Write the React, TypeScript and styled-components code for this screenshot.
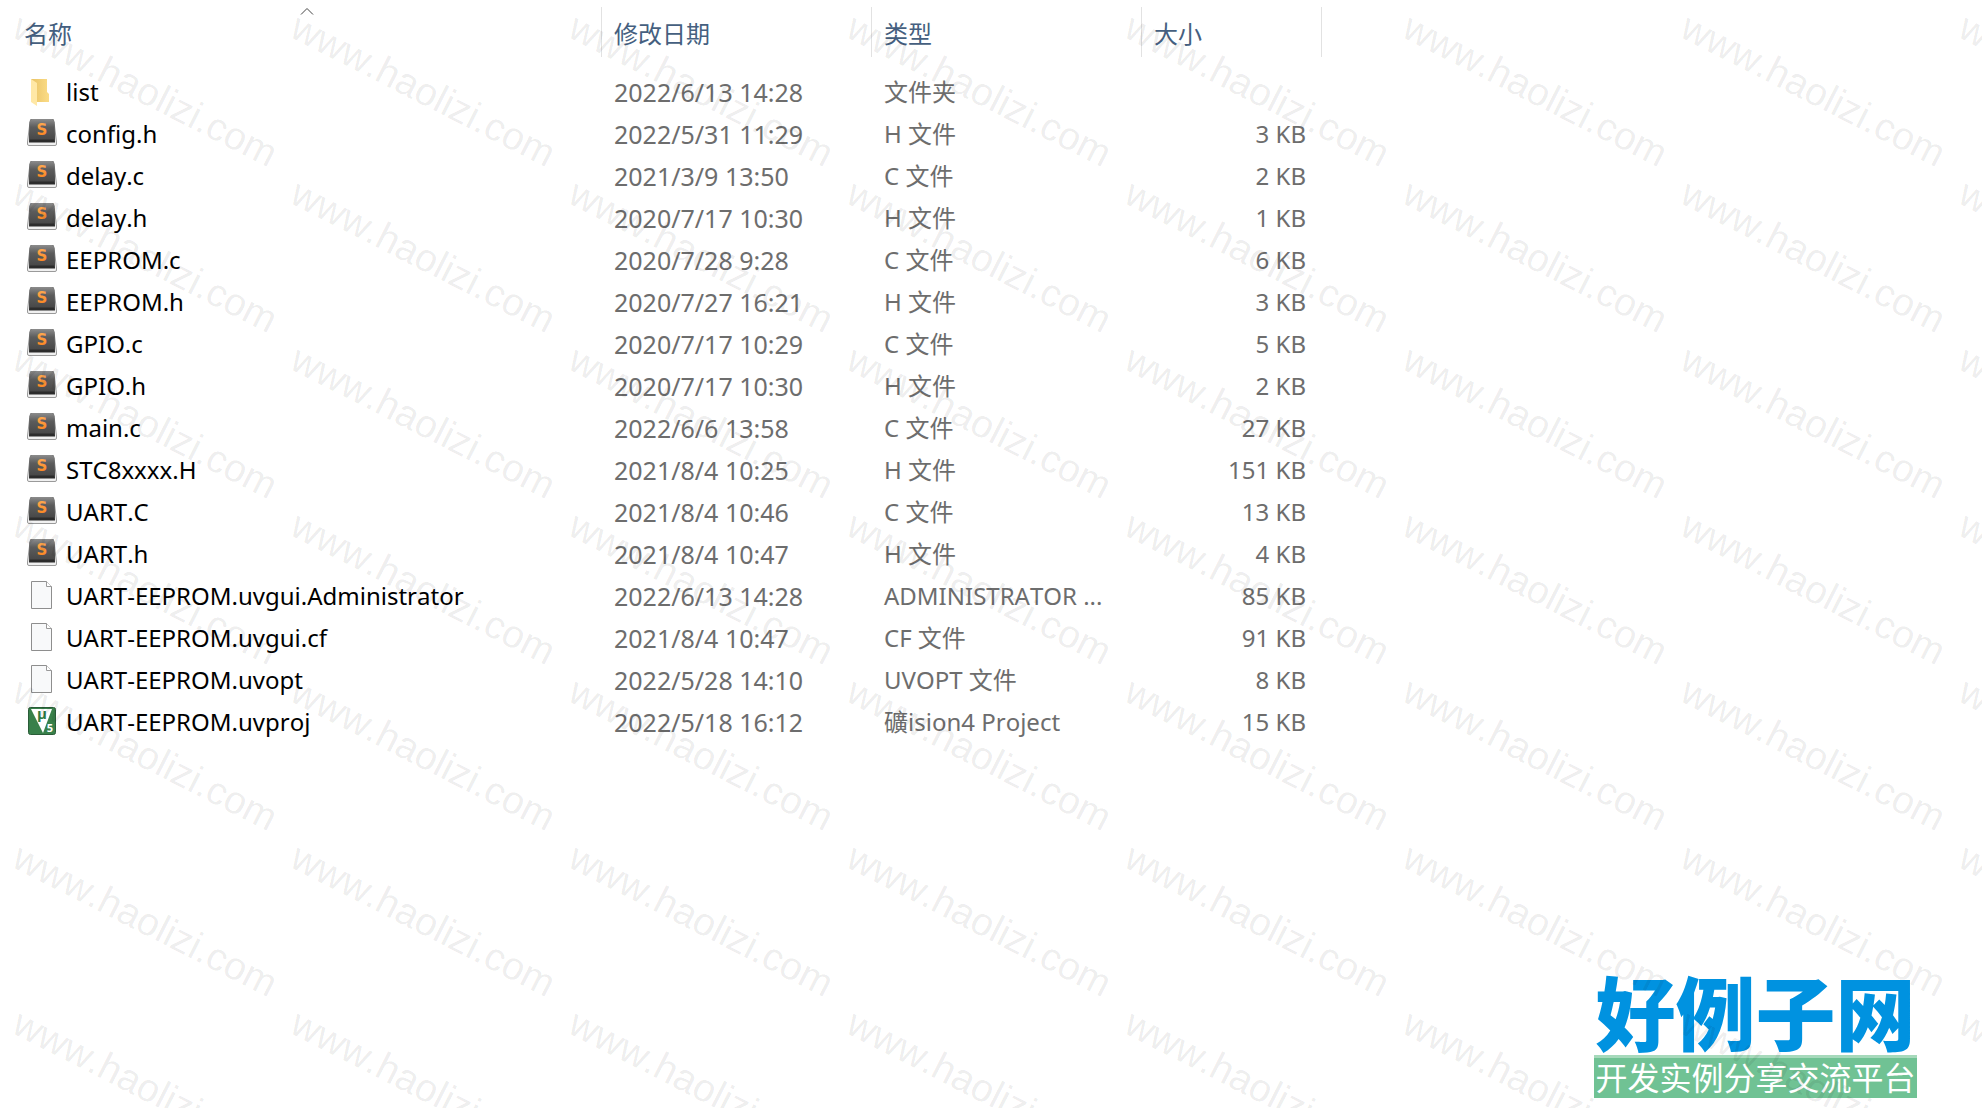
import React from "react";
import styled, { createGlobalStyle } from "styled-components";

const GlobalStyle = createGlobalStyle`
  * {
    box-sizing: border-box;
  }

  body {
    margin: 0;
    background: #ffffff;
    font-family: "Noto Sans", "Noto Sans CJK SC", sans-serif;
    font-size: 24px;
    font-kerning: none;
    line-height: 32px;
  }
`;

const Page = styled.div`
  position: relative;
  display: flex;
  flex-direction: column;
  min-height: 100vh;
  padding-left: 12px;
  overflow: hidden;
`;

const FileTable = styled.table`
  width: 1310px;
  table-layout: fixed;
  border-collapse: separate;
  border-spacing: 0;
`;

const Column = styled.col<{ $width: number }>`
  width: ${(p) => p.$width}px;
`;

const HeaderCell = styled.th`
  position: relative;
  height: 71px;
  padding: 7px 0 14px;
  font-weight: 400;
  text-align: left;
`;

const SortButton = styled.button`
  display: flex;
  align-items: center;
  width: 100%;
  height: 50px;
  padding: 4px 12px 0;
  border: 0;
  border-right: 1px solid #e2e2e2;
  background: none;
  color: #455f80;
  font: inherit;
  text-align: left;
`;

const SortArrow = styled.svg`
  position: absolute;
  top: 7px;
  left: 50%;
  width: 14px;
  height: 8px;
  margin-left: -7px;
`;

const Cell = styled.td<{ $align?: "right"; $size?: number }>`
  height: 42px;
  padding: 0 ${(p) => (p.$align ? 16 : 12)}px;
  overflow: hidden;
  color: #6d6d6d;
  font-size: ${(p) => p.$size ?? 24}px;
  text-align: ${(p) => p.$align ?? "left"};
  text-overflow: ellipsis;
  white-space: nowrap;
`;

const FileName = styled.div`
  display: flex;
  align-items: center;
  gap: 8px;
  padding-left: 2px;
  color: #000000;
`;

const Icon = styled.svg`
  flex: none;
  width: 32px;
  height: 32px;
`;

const Watermark = styled.div`
  position: absolute;
  inset: 0;
  display: grid;
  grid-template-columns: repeat(8, 278px);
  grid-auto-rows: 166px;
  overflow: hidden;
  pointer-events: none;
`;

const Mark = styled.span`
  padding-left: 10px;
  color: rgba(0, 0, 0, 0.08);
  font-family: "Liberation Sans", sans-serif;
  font-size: 39px;
  line-height: 46px;
  white-space: nowrap;
  transform: rotate(27deg);
  transform-origin: 10px 36px;
`;

const Brand = styled.footer`
  display: flex;
  flex-direction: column;
  align-self: flex-end;
  width: 323px;
  margin: auto 65px 10px 0;
  text-align: center;
  white-space: nowrap;
`;

const BrandName = styled.strong`
  padding-bottom: 4px;
  color: #0092e0;
  font-family: "Noto Sans CJK SC", sans-serif;
  font-size: 80px;
  font-weight: 900;
  line-height: 84px;
`;

const BrandTagline = styled.span`
  height: 43px;
  border-top: 3px solid #a6d9bb;
  background: #70c294;
  color: #ffffff;
  font-family: "Noto Sans CJK SC", sans-serif;
  font-size: 32px;
  line-height: 36px;
`;

type Kind = "folder" | "sublime" | "blank" | "keil";

const FileIcon = ({ kind }: { kind: Kind }) => {
  if (kind === "folder") {
    return (
      <Icon viewBox="0 0 32 32" aria-hidden="true">
        <defs>
          <linearGradient id="folderBack" x1="0" x2="1">
            <stop offset="0" stopColor="#e9c366" />
            <stop offset="1" stopColor="#fbdc86" />
          </linearGradient>
        </defs>
        <path d="M5 3H21V16L23 18V26H9Z" fill="url(#folderBack)" />
        <path d="M5 3L11 7V30L5 26Z" fill="#ffe8a6" />
      </Icon>
    );
  }
  if (kind === "sublime") {
    return (
      <Icon viewBox="0 0 32 32" aria-hidden="true">
        <defs>
          <linearGradient id="keyFace" x1="0" y1="0" x2="0" y2="1">
            <stop offset="0" stopColor="#8c8c8c" />
            <stop offset="0.4" stopColor="#5c5c5c" />
            <stop offset="1" stopColor="#484848" />
          </linearGradient>
          <linearGradient id="keyLetter" x1="0" y1="0" x2="0" y2="1">
            <stop offset="0" stopColor="#ffae55" />
            <stop offset="1" stopColor="#f97d17" />
          </linearGradient>
        </defs>
        <path d="M4 4L1.5 24V26Q1.5 27.5 3 27.5H29Q30.5 27.5 30.5 26V24L28 4Z" fill="#f0f0f0" stroke="#9a9a9a" />
        <path d="M6 1H26Q28 1 28.2 3L29 24.500H3L3.8 3Q4 1 6 1Z" fill="#2c2c2c" />
        <path d="M6 1H26Q28 1 28.2 3L29 21.500H3L3.800 3Q4 1 6 1Z" fill="url(#keyFace)" />
        <text
          x="16"
          y="17"
          textAnchor="middle"
          fontFamily="DejaVu Sans, sans-serif"
          fontSize="15"
          fontWeight="700"
          fill="url(#keyLetter)"
        >
          S
        </text>
      </Icon>
    );
  }
  if (kind === "blank") {
    return (
      <Icon viewBox="0 0 32 32" aria-hidden="true">
        <path d="M5.5 1.5H20.5L25.5 6.5V28.5H5.5Z" fill="#f8f9fa" stroke="#8e8e8e" />
        <path d="M20.5 1.5V6.5H25.5" fill="#ffffff" stroke="#9a9a9a" />
      </Icon>
    );
  }
  return (
    <Icon viewBox="0 0 32 32" aria-hidden="true">
      <rect x="2.5" y="1.5" width="27" height="27" rx="2" fill="#38804a" stroke="#2a5c38" />
      <path d="M5 3H26L17 27Z" fill="#ffffff" />
      <text x="16" y="13" textAnchor="middle" fontFamily="Open Sans, sans-serif" fontSize="15" fontWeight="700" fill="#2f7a43">
        µ
      </text>
      <text
        x="24"
        y="26"
        textAnchor="middle"
        fontFamily="Open Sans, sans-serif"
        fontSize="11"
        fontWeight="700"
        fill="#ffffff"
      >
        5
      </text>
    </Icon>
  );
};

type FileRow = { kind: Kind; name: string; date: string; type: string; size: string };

const files: FileRow[] = [
  { kind: "folder", name: "list", date: "2022/6/13 14:28", type: "文件夹", size: "" },
  { kind: "sublime", name: "config.h", date: "2022/5/31 11:29", type: "H 文件", size: "3 KB" },
  { kind: "sublime", name: "delay.c", date: "2021/3/9 13:50", type: "C 文件", size: "2 KB" },
  { kind: "sublime", name: "delay.h", date: "2020/7/17 10:30", type: "H 文件", size: "1 KB" },
  { kind: "sublime", name: "EEPROM.c", date: "2020/7/28 9:28", type: "C 文件", size: "6 KB" },
  { kind: "sublime", name: "EEPROM.h", date: "2020/7/27 16:21", type: "H 文件", size: "3 KB" },
  { kind: "sublime", name: "GPIO.c", date: "2020/7/17 10:29", type: "C 文件", size: "5 KB" },
  { kind: "sublime", name: "GPIO.h", date: "2020/7/17 10:30", type: "H 文件", size: "2 KB" },
  { kind: "sublime", name: "main.c", date: "2022/6/6 13:58", type: "C 文件", size: "27 KB" },
  { kind: "sublime", name: "STC8xxxx.H", date: "2021/8/4 10:25", type: "H 文件", size: "151 KB" },
  { kind: "sublime", name: "UART.C", date: "2021/8/4 10:46", type: "C 文件", size: "13 KB" },
  { kind: "sublime", name: "UART.h", date: "2021/8/4 10:47", type: "H 文件", size: "4 KB" },
  { kind: "blank", name: "UART-EEPROM.uvgui.Administrator", date: "2022/6/13 14:28", type: "ADMINISTRATOR ...", size: "85 KB" },
  { kind: "blank", name: "UART-EEPROM.uvgui.cf", date: "2021/8/4 10:47", type: "CF 文件", size: "91 KB" },
  { kind: "blank", name: "UART-EEPROM.uvopt", date: "2022/5/28 14:10", type: "UVOPT 文件", size: "8 KB" },
  { kind: "keil", name: "UART-EEPROM.uvproj", date: "2022/5/18 16:12", type: "礦ision4 Project", size: "15 KB" },
];

const columns = [
  { title: "名称", width: 590 },
  { title: "修改日期", width: 270 },
  { title: "类型", width: 270 },
  { title: "大小", width: 180 },
];

const marks = Array.from({ length: 56 }, (_, i) => i);

export default function App() {
  return (
    <>
      <GlobalStyle />
      <Page>
        <FileTable>
          <colgroup>
            {columns.map((c) => (
              <Column key={c.title} $width={c.width} />
            ))}
          </colgroup>
          <thead>
            <tr>
              {columns.map((c, i) => (
                <HeaderCell key={c.title} scope="col" aria-sort={i === 0 ? "ascending" : undefined}>
                  <SortButton type="button">{c.title}</SortButton>
                  {i === 0 && (
                    <SortArrow viewBox="0 0 14 8" aria-hidden="true">
                      <path d="M1 7.5L7 1.5L13 7.5" fill="none" stroke="#444444" />
                    </SortArrow>
                  )}
                </HeaderCell>
              ))}
            </tr>
          </thead>
          <tbody>
            {files.map((f) => (
              <tr key={f.name}>
                <Cell>
                  <FileName>
                    <FileIcon kind={f.kind} />
                    {f.name}
                  </FileName>
                </Cell>
                <Cell $size={25}>{f.date}</Cell>
                <Cell>{f.type}</Cell>
                <Cell $align="right">{f.size}</Cell>
              </tr>
            ))}
          </tbody>
        </FileTable>
        <Brand>
          <BrandName>好例子网</BrandName>
          <BrandTagline>开发实例分享交流平台</BrandTagline>
        </Brand>
        <Watermark aria-hidden="true">
          {marks.map((m) => (
            <Mark key={m}>www.haolizi.com</Mark>
          ))}
        </Watermark>
      </Page>
    </>
  );
}
